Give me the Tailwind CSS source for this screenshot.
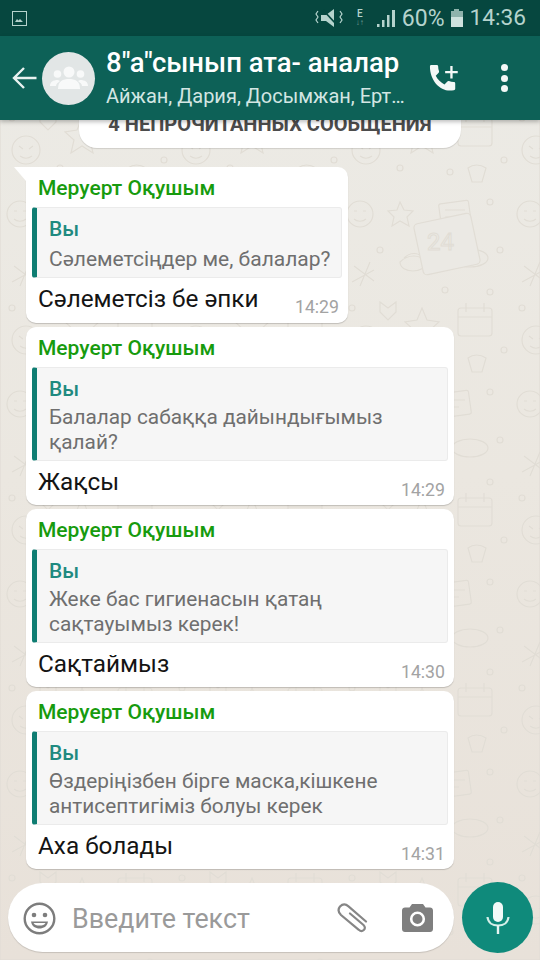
<!DOCTYPE html>
<html lang="ru">
  <head>
    <meta charset="UTF-8" />
    <meta name="viewport" content="width=device-width, initial-scale=1.0" />
    <title>WhatsApp chat</title>
    <script src="https://cdn.jsdelivr.net/npm/@tailwindcss/browser@4"></script>
  </head>
  <body class="overflow-hidden">
    <div class="relative w-[540px] h-[960px] overflow-hidden flex flex-col font-['Roboto',sans-serif] bg-gradient-to-b from-[#ecebe6] via-[#ebe7e0] to-[#e8e1d9]">
      <!-- wallpaper doodles -->
      <svg class="absolute inset-0" width="540" height="960" fill="none" stroke="#e1ddd5" stroke-width="1.200">
        <defs>
          <pattern id="doodles" width="170" height="190" patternUnits="userSpaceOnUse">
            <circle cx="20" cy="24" r="13" /><path d="M14 21h3M23 21h3M14 29c3 3 9 3 12 0" />
            <path d="M60 12l4 8 9 1-6 6 2 9-9-5-8 5 2-9-6-6 9-1z" />
            <rect x="100" y="12" width="30" height="24" rx="2" transform="rotate(-8 115 24)" /><path d="M105 20h20M105 27h14" />
            <circle cx="150" cy="12" r="3" /><circle cx="90" cy="50" r="3" /><circle cx="40" cy="60" r="3" /><circle cx="160" cy="60" r="3" />
            <ellipse cx="130" cy="68" rx="18" ry="9" />
            <path d="M14 76l20 15M30 72l-10 24M12 92l22-12" />
            <path d="M60 72c8-8 20-8 26 0 0 12-26 12-26 0zM64 68c6-6 14-6 20 0" />
            <circle cx="105" cy="100" r="3" /><circle cx="12" cy="118" r="3" /><circle cx="150" cy="102" r="3" />
            <path d="M40 112l8 6 8-6 0 10-8 8-8-8z" />
            <path d="M82 118l5 12 12 2-9 8 3 13-11-7-11 7 3-13-9-8 12-2z" />
            <rect x="118" y="118" width="34" height="28" rx="3" /><path d="M118 127h34M126 113v9M144 113v9" />
            <circle cx="26" cy="150" r="14" /><path d="M19 146l4 3M33 146l-4 3M20 156c4 3 8 3 12 0" />
            <circle cx="60" cy="168" r="3" /><circle cx="164" cy="160" r="3" /><circle cx="110" cy="172" r="3" />
            <path d="M128 168c5-4 12-4 18 0l-4 14h-10z" />
          </pattern>
        </defs>
        <rect width="540" height="960" fill="url(#doodles)" />
        <rect x="418" y="218" width="58" height="52" rx="4" transform="rotate(-12 447 244)" fill="#ebe9e4" />
        <text x="427" y="250" font-size="24" font-family="Roboto" stroke-width="1">24</text>
      </svg>

      <!-- status bar -->
      <div class="relative z-20 h-[36px] shrink-0 bg-[#06473f] flex items-center pl-[12px] pr-[14px] text-[#b5d3cd]">
        <svg width="15" height="15" viewBox="0 0 15 15" fill="none" stroke="#b5d3cd" stroke-width="1">
          <rect x="0.5" y="0.5" width="14" height="14" />
          <path d="M3 11l2-3 1.500 1.500L8 8l3 3z" fill="#b5d3cd" stroke="none" />
        </svg>
        <div class="ml-auto flex items-center">
          <svg width="28" height="18" viewBox="0 0 28 18" fill="none" stroke="#b5d3cd" stroke-width="1.200">
            <path d="M6 6h5l8-6v18l-8-6H6z" fill="#b5d3cd" stroke="none" />
            <path d="M8 1l14 15" stroke="#06473f" stroke-width="1.800" />
            <path d="M3 2l-2 3 2 3-2 3 2 3M25 2l2 3-2 3 2 3-2 3" />
          </svg>
          <div class="ml-[12px] w-[10px] flex flex-col items-center leading-none text-[10px] font-medium">
            <span>E</span><span class="text-[8px] opacity-60">↓↑</span>
          </div>
          <svg class="ml-[12px]" width="18" height="18" viewBox="0 0 18 18" fill="#b5d3cd">
            <rect x="0" y="15" width="2.500" height="3" /><rect x="5" y="11" width="2.500" height="7" />
            <rect x="10" y="6" width="2.500" height="12" /><rect x="15" y="1" width="3" height="17" />
          </svg>
          <span class="ml-[7px] text-[23px] leading-none">60%</span>
          <div class="ml-[6px] w-[12px] h-[18px] flex flex-col">
            <div class="mx-auto w-[5px] h-[2px] bg-[#8fb3ac]"></div>
            <div class="h-[6px] bg-[#8fb3ac]"></div>
            <div class="flex-1 bg-[#cfe2de]"></div>
          </div>
          <span class="ml-[7px] text-[22.700px] leading-none">14:36</span>
        </div>
      </div>

      <!-- header -->
      <div class="relative z-20 h-[84px] shrink-0 bg-[#0d6157] flex items-center shadow-[0_2px_4px_rgba(0,0,0,0.25)]">
        <svg class="ml-[12px] shrink-0" width="25" height="24" viewBox="0 0 25 24" fill="none" stroke="#e8f2f0" stroke-width="2.400">
          <path d="M24.500 12H2M12 2L2 12l10 10" />
        </svg>
        <div class="ml-[5px] w-[53px] h-[53px] shrink-0 rounded-full bg-[#e2e6e6] flex items-center justify-center">
          <svg width="38" height="24" viewBox="0 0 38 24" fill="#f8f9f9">
            <circle cx="19" cy="6" r="5.500" /><circle cx="7.500" cy="8" r="3.800" /><circle cx="30.500" cy="8" r="3.800" />
            <path d="M8 23c0-8 5-10 11-10s11 2 11 10z" />
            <path d="M0 20c0-4 3-6 8-6l2 1c-2 1.500-4 3-4 5zM38 20c0-4-3-6-8-6l-2 1c2 1.500 4 3 4 5z" />
          </svg>
        </div>
        <div class="ml-[11px] w-[302px] shrink-0 pb-[2px]">
          <div class="text-[27.500px] leading-[32px] font-medium text-white whitespace-nowrap">8"а"сынып ата- аналар</div>
          <div class="mt-[5px] text-[20px] leading-[24px] text-[#d3e6e3] whitespace-nowrap">Айжан, Дария, Досымжан, Ерт…</div>
        </div>
        <svg class="ml-[20px] shrink-0" width="31" height="31" viewBox="0 0 32 32" fill="#f4f8f7">
          <path d="M2 3.500c0-1 .8-1.500 1.500-1.500h5.500c1 0 1.500.7 1.500 1.500 0 1.800.3 3.400.9 5 .2.600 0 1.200-.4 1.600l-3 3c1.900 3.800 5.200 7 9 9l3-3c.4-.4 1-.6 1.600-.4 1.600.6 3.200.9 5 .9.800 0 1.500.5 1.500 1.500v5.400c0 .7-.5 1.500-1.500 1.500C14 31 2 19 2 3.500z" />
          <path d="M23 3h2.400v5.300h5.300v2.400h-5.300V16H23v-5.300h-5.300V8.300H23z" />
        </svg>
        <div class="ml-[42px] flex flex-col gap-[3.500px]">
          <span class="w-[7px] h-[7px] rounded-full bg-[#f4f8f7]"></span>
          <span class="w-[7px] h-[7px] rounded-full bg-[#f4f8f7]"></span>
          <span class="w-[7px] h-[7px] rounded-full bg-[#f4f8f7]"></span>
        </div>
      </div>

      <!-- chat -->
      <div class="relative z-10 flex-1 flex flex-col pl-[26px] items-start">
        <!-- unread banner, half hidden under header -->
        <div class="-mt-[12px] ml-[53px] w-[382px] h-[40px] pb-[9px] rounded-b-[18px] bg-white shadow-[0_1px_1px_rgba(0,0,0,0.12)] flex items-center justify-center text-[20px] font-bold text-[#4c4c4c] whitespace-nowrap">4 НЕПРОЧИТАННЫХ СООБЩЕНИЯ</div>

        <!-- first message -->
        <div class="relative mt-[19px] w-[322px] h-[156px] rounded-[10px] rounded-tl-none bg-white shadow-[0_1px_1px_rgba(0,0,0,0.18)] p-[7px_6px_0]">
          <div class="absolute -left-[12px] top-0 w-0 h-0 border-t-[14px] border-t-white border-l-[12px] border-l-transparent"></div>
          <div class="ml-[6px] text-[21px] leading-[28px] font-medium text-[#179b0e]">Меруерт Оқушым</div>
          <div class="mt-[5px] h-[71px] rounded-[3px] bg-[#f6f6f6] border border-[#ebebeb] border-l-[5px] border-l-[#0f7d72] pl-[12px] pt-[7px]">
            <div class="text-[21px] leading-[28px] font-medium text-[#1f8a80]">Вы</div>
            <div class="mt-[2px] text-[21px] leading-[28px] text-[#6f6f6f] whitespace-nowrap">Сәлеметсіңдер ме, балалар?</div>
          </div>
          <div class="flex items-end justify-between pl-[6px] pr-[3px] mt-[6px]">
            <span class="text-[24.300px] leading-[30px] text-[#141414]">Сәлеметсіз бе әпки</span>
            <span class="text-[17.700px] leading-[20px] -mb-[3px] text-[#a3a3a3]">14:29</span>
          </div>
        </div>

        <!-- second message -->
        <div class="mt-[4px] w-[428px] h-[178px] rounded-[10px] bg-white shadow-[0_1px_1px_rgba(0,0,0,0.18)] p-[7px_6px_0]">
          <div class="ml-[6px] text-[21px] leading-[28px] font-medium text-[#179b0e]">Меруерт Оқушым</div>
          <div class="mt-[5px] h-[94px] rounded-[3px] bg-[#f6f6f6] border border-[#ebebeb] border-l-[5px] border-l-[#0f7d72] pl-[12px] pt-[7px]">
            <div class="text-[21px] leading-[28px] font-medium text-[#1f8a80]">Вы</div>
            <div class="mt-[2px] text-[20.800px] leading-[25px] text-[#6f6f6f] whitespace-nowrap">Балалар сабаққа дайындығымыз<br />қалай?</div>
          </div>
          <div class="flex items-end justify-between pl-[6px] pr-[3px] mt-[6px]">
            <span class="text-[24.300px] leading-[30px] text-[#141414]">Жақсы</span>
            <span class="text-[17.700px] leading-[20px] -mb-[3px] text-[#a3a3a3]">14:29</span>
          </div>
        </div>

        <!-- third message -->
        <div class="mt-[4px] w-[428px] h-[178px] rounded-[10px] bg-white shadow-[0_1px_1px_rgba(0,0,0,0.18)] p-[7px_6px_0]">
          <div class="ml-[6px] text-[21px] leading-[28px] font-medium text-[#179b0e]">Меруерт Оқушым</div>
          <div class="mt-[5px] h-[94px] rounded-[3px] bg-[#f6f6f6] border border-[#ebebeb] border-l-[5px] border-l-[#0f7d72] pl-[12px] pt-[7px]">
            <div class="text-[21px] leading-[28px] font-medium text-[#1f8a80]">Вы</div>
            <div class="mt-[2px] text-[20.800px] leading-[25px] text-[#6f6f6f] whitespace-nowrap">Жеке бас гигиенасын қатаң<br />сақтауымыз керек!</div>
          </div>
          <div class="flex items-end justify-between pl-[6px] pr-[3px] mt-[6px]">
            <span class="text-[24.300px] leading-[30px] text-[#141414]">Сақтаймыз</span>
            <span class="text-[17.700px] leading-[20px] -mb-[3px] text-[#a3a3a3]">14:30</span>
          </div>
        </div>

        <!-- fourth message -->
        <div class="mt-[4px] w-[428px] h-[178px] rounded-[10px] bg-white shadow-[0_1px_1px_rgba(0,0,0,0.18)] p-[7px_6px_0]">
          <div class="ml-[6px] text-[21px] leading-[28px] font-medium text-[#179b0e]">Меруерт Оқушым</div>
          <div class="mt-[5px] h-[94px] rounded-[3px] bg-[#f6f6f6] border border-[#ebebeb] border-l-[5px] border-l-[#0f7d72] pl-[12px] pt-[7px]">
            <div class="text-[21px] leading-[28px] font-medium text-[#1f8a80]">Вы</div>
            <div class="mt-[2px] text-[20.800px] leading-[25px] text-[#6f6f6f] whitespace-nowrap">Өздеріңізбен бірге маска,кішкене<br />антисептигіміз болуы керек</div>
          </div>
          <div class="flex items-end justify-between pl-[6px] pr-[3px] mt-[6px]">
            <span class="text-[24.300px] leading-[30px] text-[#141414]">Аха болады</span>
            <span class="text-[17.700px] leading-[20px] -mb-[3px] text-[#a3a3a3]">14:31</span>
          </div>
        </div>

        <!-- input row -->
        <div class="-ml-[26px] mt-[13px] pl-[8px] flex items-center">
          <div class="w-[446px] h-[69px] pt-[1px] rounded-[35px] bg-white shadow-[0_1px_1px_rgba(0,0,0,0.15)] flex items-center pl-[15px]">
            <svg class="shrink-0" width="33" height="33" viewBox="0 0 33 33" fill="none" stroke="#7d7d7d" stroke-width="2.400">
              <circle cx="16.500" cy="16.500" r="14.800" />
              <circle cx="11" cy="13" r="2.300" fill="#7d7d7d" stroke="none" />
              <circle cx="22" cy="13" r="2.300" fill="#7d7d7d" stroke="none" />
              <path d="M8 19.500h17c-.8 5-4.500 7-8.500 7s-7.700-2-8.500-7z" fill="#7d7d7d" stroke="none" />
              <path d="M10.500 21h12c-1 2-3 2.500-6 2.500s-5-.5-6-2.500z" fill="#fff" stroke="none" />
            </svg>
            <span class="ml-[16px] mt-[2px] w-[265px] shrink-0 text-[26.800px] leading-none text-[#9a9a9a] whitespace-nowrap">Введите текст</span>
            <svg class="shrink-0" width="32" height="30" viewBox="0 0 32 30" fill="none" stroke="#868686" stroke-width="2.200" stroke-linecap="round">
              <path d="M13 10.500l13.500 11.500c1.800 1.700 1.700 3.700.3 5-1.400 1.300-3.400 1.300-5-.2L4 12C1 9 1 6 3 3.500 5.500 1 8.800 1 11.500 3.300L29 18.500" />
            </svg>
            <svg class="ml-[33px] shrink-0" width="31" height="28" viewBox="0 0 31 28">
              <path d="M10 0h11l2.500 3.500H28c1.700 0 3 1.300 3 3V25c0 1.700-1.300 3-3 3H3c-1.700 0-3-1.300-3-3V6.500c0-1.700 1.300-3 3-3h4.500z" fill="#7f7f7f" />
              <circle cx="15.500" cy="15" r="6.300" fill="none" stroke="#fff" stroke-width="2.600" />
            </svg>
          </div>
          <div class="ml-[8px] w-[71px] h-[71px] rounded-full bg-[#0f8a7b] flex items-center justify-center">
            <svg width="24" height="32" viewBox="0 0 24 32">
              <rect x="7" y="0" width="10" height="20" rx="5" fill="#f2faf8" />
              <path d="M1.500 15c.5 5.500 5 8.500 10.500 8.500s10-3 10.500-8.500" fill="none" stroke="#d5efe9" stroke-width="2.200" />
              <rect x="10.800" y="23" width="2.400" height="9" fill="#e6f5f2" />
            </svg>
          </div>
        </div>
      </div>
    </div>
  </body>
</html>
